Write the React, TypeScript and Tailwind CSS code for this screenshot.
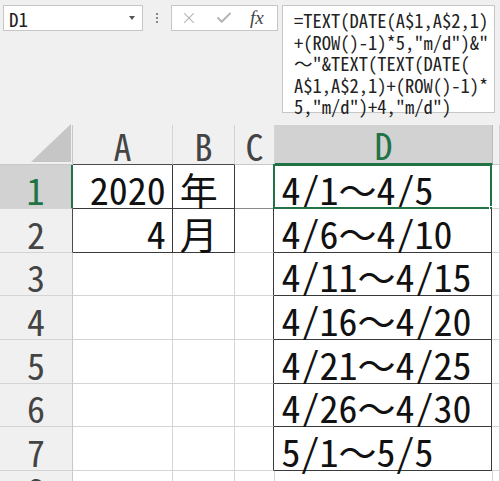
import { X, Check } from 'lucide-react';

const JP = "font-['Noto_Sans_CJK_JP',sans-serif] [font-feature-settings:'hwid']";

const COLS = ['A', 'B', 'C', 'D', 'E'];
const W = ['w-[100px]', 'w-[62px]', 'w-[40px]', 'w-[218px]', 'w-[7px]'];
const H = ['h-[44px]', 'h-[44px]', 'h-[43px]', 'h-[44px]', 'h-[44px]', 'h-[43px]', 'h-[44px]'];

const DCOL = ['4/1～4/5', '4/6～4/10', '4/11～4/15', '4/16～4/20', '4/21～4/25', '4/26～4/30', '5/1～5/5'];

const FORMULA = [
  '=TEXT(DATE(A$1,A$2,1)',
  '+(ROW()-1)*5,"m/d")&"',
  '～"&TEXT(TEXT(DATE(',
  'A$1,A$2,1)+(ROW()-1)*',
  '5,"m/d")+4,"m/d")',
];

// full-width tilde must keep its own width, so switch hwid off for it
function Txt({ s }: { s: string }) {
  const parts = s.split('～');
  return (
    <>
      {parts.map((p, i) => (
        <span key={i}>
          {i > 0 && <span className="[font-feature-settings:normal]">～</span>}
          {p}
        </span>
      ))}
    </>
  );
}

function Toolbar() {
  return (
    <div className="h-[125px] flex items-start pt-[5px] pl-[3px] gap-0">
      <div className="w-[140px] h-[26px] bg-white border border-[#c6c6c6] flex items-center justify-between pl-[5px] pr-[7px]">
        <span className={`${JP} text-[19px] text-[#222] leading-none`}>D1</span>
        <span className="w-0 h-0 border-l-[3px] border-r-[3px] border-t-[4px] border-l-transparent border-r-transparent border-t-[#555]" />
      </div>
      <div className="w-[28px] h-[26px] flex flex-col items-center justify-center gap-[2px]">
        <span className="w-[2px] h-[2px] bg-[#888]" />
        <span className="w-[2px] h-[2px] bg-[#888]" />
        <span className="w-[2px] h-[2px] bg-[#888]" />
      </div>
      <div className="w-[107px] h-[26px] bg-white border border-[#c6c6c6] flex items-center pl-[8px] gap-[17px]">
        <X className="w-[18px] h-[18px] text-[#a8a8a8]" strokeWidth={1.4} />
        <Check className="w-[18px] h-[18px] text-[#b4b4b4]" strokeWidth={2.6} />
        <span className="font-['Liberation_Serif',serif] italic text-[19px] leading-none text-[#444] -mt-[2px]">fx</span>
      </div>
      <div className="ml-[4px] w-[213px] h-[108px] bg-white border border-[#c6c6c6] pl-[11px] pt-[4px]">
        {FORMULA.map((l) => (
          <div key={l} className={`${JP} text-[18.5px] leading-[21.5px] text-[#222] whitespace-pre`}>
            <Txt s={l} />
          </div>
        ))}
      </div>
    </div>
  );
}

function HeaderRow() {
  return (
    <div className="flex h-[40px]">
      <div className="w-[73px] h-full border-r border-b border-[#c8c8c8] flex items-end justify-end pr-[1px] pb-[2px]">
        <svg width="40" height="38" viewBox="0 0 40 38">
          <polygon points="40,0 40,38 0,38" fill="#c6c6c6" />
        </svg>
      </div>
      {COLS.map((c, i) => {
        const sel = c === 'D';
        return (
          <div
            key={c}
            className={`${W[i]} h-full flex items-end justify-center ${JP} text-[36px] leading-[38px] ${
              sel
                ? 'bg-[#d2d2d2] text-[#217346] border-b-2 border-b-[#217346] border-r border-r-[#bcbcbc]'
                : `text-[#444] border-r border-r-[#d4d4d4] border-b ${c === 'A' || c === 'B' ? 'border-b-[#4a4a4a]' : 'border-b-[#c8c8c8]'}`
            }`}
          >
            {c !== 'E' && c}
          </div>
        );
      })}
    </div>
  );
}

function Row({ r }: { r: number }) {
  const sel = r === 1;
  const boxed = r <= 2;
  const data: Record<string, string> = {
    A: r === 1 ? '2020' : r === 2 ? '4' : '',
    B: r === 1 ? '年' : r === 2 ? '月' : '',
    C: '',
    D: DCOL[r - 1],
    E: '',
  };
  return (
    <div className={`flex ${H[r - 1]}`}>
      <div
        className={`w-[73px] h-full flex items-end justify-center ${JP} text-[36px] leading-none pb-[1px] border-b border-b-[#d4d4d4] ${
          sel ? 'bg-[#d2d2d2] text-[#217346] border-r-2 border-r-[#217346]' : `text-[#444] border-r ${r === 2 ? 'border-r-[#4a4a4a]' : 'border-r-[#c8c8c8]'}`
        }`}
      >
        {r}
      </div>
      {COLS.map((c, i) => {
        let bc = 'border-r-[#d4d4d4] border-b-[#d4d4d4]';
        if ((c === 'A' || c === 'B') && boxed) bc = 'border-r-[#3a3a3a] border-b-[#3a3a3a]';
        if (c === 'C') bc = `border-r-[#3a3a3a] ${r === 1 ? 'border-b-[#8a8a8a]' : 'border-b-[#d4d4d4]'}`;
        if (c === 'D') bc = 'border-r-[#3a3a3a] border-b-[#3a3a3a]';
        const isD1 = c === 'D' && r === 1;
        return (
          <div
            key={c}
            className={`${W[i]} h-full border-r border-b ${bc} relative flex items-end ${c === 'A' ? 'justify-end pr-[6px]' : 'justify-start pl-[7px]'} bg-white ${JP} text-[38px] leading-none pb-[0px] text-[#111] whitespace-nowrap`}
          >
            <Txt s={data[c]} />
            {isD1 && (
              <>
                <div className="absolute -left-[1px] -top-[1px] -right-[1px] -bottom-[1px] border-2 border-[#217346] pointer-events-none" />
                <div className="absolute -right-[4px] -bottom-[4px] w-[6px] h-[6px] bg-[#217346] border border-white" />
              </>
            )}
          </div>
        );
      })}
    </div>
  );
}

export default function App() {
  return (
    <div className="w-[500px] h-[481px] overflow-hidden bg-[#f0f0f0]">
      <Toolbar />
      <HeaderRow />
      {[1, 2, 3, 4, 5, 6, 7].map((r) => (
        <Row key={r} r={r} />
      ))}
      <div className="flex h-[40px]">
        <div className={`w-[73px] h-full flex items-start justify-center ${JP} text-[36px] leading-none border-r border-[#c8c8c8] text-[#444]`}>8</div>
        {COLS.map((c, i) => (
          <div key={c} className={`${W[i]} h-full border-r border-[#d4d4d4] bg-white`} />
        ))}
      </div>
    </div>
  );
}
